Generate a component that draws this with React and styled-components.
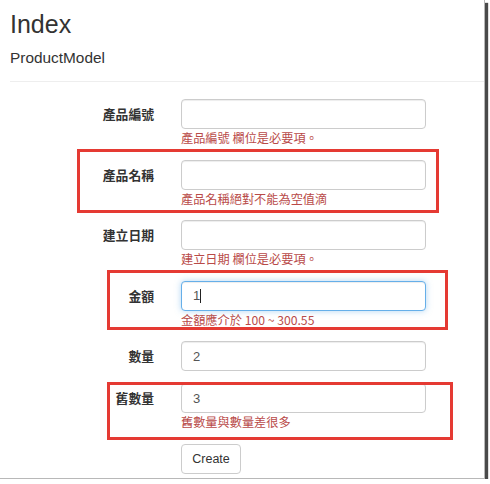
import React from 'react';
import styled, { createGlobalStyle } from 'styled-components';

const GlobalStyle = createGlobalStyle`
    html, body {
        margin: 0;
        padding: 0;
        background: #ffffff;
    }
    body {
        font-family: "Liberation Sans", Arial, "Noto Sans CJK TC", sans-serif;
        color: #333333;
    }
`;

const fields = [
    { label: '產品編號', value: '', error: '產品編號 欄位是必要項。' },
    { label: '產品名稱', value: '', error: '產品名稱絕對不能為空值滴' },
    { label: '建立日期', value: '', error: '建立日期 欄位是必要項。' },
    { label: '金額', value: '1', error: '金額應介於 100 ~ 300.55', focused: true },
    { label: '數量', value: '2' },
    { label: '舊數量', value: '3', error: '舊數量與數量差很多' },
];

const marks = [
    { left: 77, top: 149, width: 362, height: 64 },
    { left: 107, top: 270, width: 341, height: 60 },
    { left: 107, top: 382, width: 346, height: 58 },
];

export default function App() {
    return (
        <>
            <GlobalStyle />
            <Frame>
                <Title>Index</Title>
                <Subtitle>ProductModel</Subtitle>
                <Rule />
                <Form>
                    {fields.map((field) => (
                        <Row key={field.label}>
                            <Label>{field.label}</Label>
                            <InputWrap>
                                <Input
                                    type="text"
                                    readOnly
                                    value={field.value}
                                    $focused={field.focused}
                                />
                                {field.focused && <Caret />}
                            </InputWrap>
                            {field.error && <Error>{field.error}</Error>}
                        </Row>
                    ))}
                    <Actions>
                        <Button type="button">Create</Button>
                    </Actions>
                </Form>
                {marks.map((m, i) => (
                    <Mark
                        key={i}
                        style={{ left: m.left, top: m.top, width: m.width, height: m.height }}
                    />
                ))}
            </Frame>
        </>
    );
}

const Frame = styled.div`
    position: relative;
    box-sizing: border-box;
    width: 485px;
    height: 479px;
    overflow: hidden;
    background: #ffffff;
    border-right: 1px solid #b8b8b8;
    border-bottom: 1px solid #b8b8b8;
    box-shadow: 3px 3px 1px #4a4a4a;
`;

const Title = styled.h1`
    margin: 10px 0 0 10px;
    font-size: 25px;
    font-weight: 400;
    line-height: 28px;
    color: #333333;
`;

const Subtitle = styled.h4`
    margin: 11px 0 0 10px;
    font-size: 15.4px;
    font-weight: 400;
    line-height: 17px;
    color: #333333;
`;

const Rule = styled.hr`
    margin: 15px 0 0 10px;
    border: 0;
    border-top: 1px solid #eeeeee;
`;

const Form = styled.div`
    padding-top: 17px;
`;

const Row = styled.div`
    display: grid;
    grid-template-columns: 144px 245px;
    column-gap: 27px;
    padding-left: 10px;
    margin-bottom: 12px;
`;

const Label = styled.label`
    text-align: right;
    font-family: "Noto Sans CJK TC", "Liberation Sans", sans-serif;
    font-size: 12.8px;
    font-weight: 700;
    line-height: 30px;
    color: #333333;
`;

const InputWrap = styled.div`
    position: relative;
    grid-column: 2;
`;

const Input = styled.input`
    display: block;
    box-sizing: border-box;
    width: 100%;
    height: 30px;
    padding: 0 11px;
    font-family: "Liberation Sans", Arial, sans-serif;
    font-size: 13px;
    color: #555555;
    background: #ffffff;
    border: 1px solid ${(p) => (p.$focused ? '#66afe9' : '#cccccc')};
    border-radius: 4px;
    outline: none;
    box-shadow: ${(p) =>
        p.$focused
            ? 'inset 0 1px 1px rgba(0,0,0,.075), 0 0 6px rgba(102,175,233,.5)'
            : 'inset 0 1px 1px rgba(0,0,0,.075)'};
`;

const Caret = styled.span`
    position: absolute;
    left: 19px;
    top: 8px;
    width: 1px;
    height: 14px;
    background: #222222;
`;

const Error = styled.span`
    grid-column: 2;
    font-family: "Noto Sans CJK TC", "Liberation Sans", sans-serif;
    font-size: 12.2px;
    line-height: 18.5px;
    color: #b94a48;
    white-space: nowrap;
`;

const Actions = styled.div`
    padding-left: 181px;
`;

const Button = styled.button`
    box-sizing: border-box;
    width: 60px;
    height: 30px;
    padding: 0;
    font-family: "Liberation Sans", Arial, sans-serif;
    font-size: 12.5px;
    color: #333333;
    background: #ffffff;
    border: 1px solid #cccccc;
    border-radius: 4px;
`;

const Mark = styled.div`
    position: absolute;
    box-sizing: border-box;
    border: 3px solid #e53a33;
    pointer-events: none;
`;
